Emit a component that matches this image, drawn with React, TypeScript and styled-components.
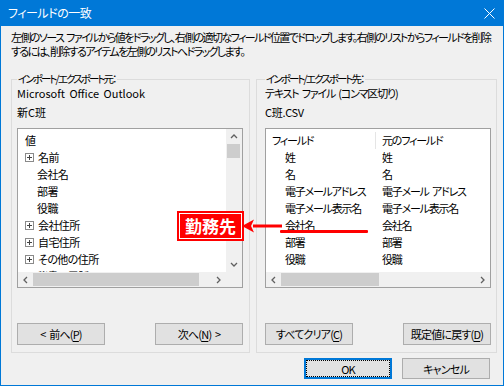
import styled, { createGlobalStyle } from "styled-components"

const GlobalStyle = createGlobalStyle`
	html, body {
		margin: 0;
		padding: 0;
		background: #f0f0f0;
	}
	body {
		font-family: "Noto Sans CJK JP", "Noto Sans", sans-serif;
		font-size: 11px;
		letter-spacing: -1.2px;
		font-feature-settings: "palt";
		color: #000;
	}
`

const Window = styled.div`
	width: 504px;
	height: 386px;
	box-sizing: border-box;
	border: 1px solid #0078d7;
	border-top: none;
	background: #f0f0f0;
	display: flex;
	flex-direction: column;
`

const TitleBar = styled.div`
	height: 26px;
	flex: none;
	background: #0078d7;
	color: #fff;
	display: flex;
	align-items: center;
	justify-content: space-between;
	padding: 0 8px 0 7px;
	font-size: 12px;
	letter-spacing: -0.5px;
	line-height: 14px;
`

const Description = styled.div`
	padding: 4px 10px 0;
	line-height: 14px;
	white-space: nowrap;
	letter-spacing: -1.6px;
	word-spacing: 2px;
`

const GroupsRow = styled.div`
	position: relative;
	margin-top: 14px;
	padding: 0 6px 0 10px;
	display: flex;
	gap: 6px;
`

const Group = styled.fieldset<{ $width: number; $inset: number }>`
	width: ${(p) => p.$width}px;
	box-sizing: border-box;
	margin: 0;
	padding: 0 0 7px ${(p) => p.$inset}px;
	border: 1px solid #dcdcdc;
	min-inline-size: 0;
`

const Legend = styled.legend`
	padding: 0 1px;
	font-size: 10.5px;
	letter-spacing: -1.9px;
	line-height: 14px;
	white-space: nowrap;
`

const InfoLine = styled.div<{ $gap?: number; $spacing?: number }>`
	line-height: 14px;
	white-space: nowrap;
	word-spacing: 2px;
	margin-top: ${(p) => p.$gap ?? 0}px;
	${(p) => (p.$spacing !== undefined ? `letter-spacing: ${p.$spacing}px;` : "")}
`

const ListBox = styled.div`
	width: 226px;
	height: 160px;
	box-sizing: border-box;
	margin-top: 9px;
	border: 1px solid #a0a0a0;
	background: #fff;
	display: grid;
	grid-template-columns: 1fr auto;
	grid-template-rows: 1fr 15px;
	overflow: hidden;
`

const ListContent = styled.div`
	padding-top: 3px;
	overflow: hidden;
	min-width: 0;
`

const Row = styled.div<{ $indent: number }>`
	height: 17px;
	line-height: 17px;
	padding-left: ${(p) => p.$indent}px;
	display: flex;
	align-items: center;
	white-space: nowrap;
	letter-spacing: -0.6px;
`

const Expander = styled.span`
	width: 7px;
	height: 7px;
	border: 1px solid #8a8a8a;
	margin-right: 4px;
	position: relative;
	flex: none;

	&::before,
	&::after {
		content: "";
		position: absolute;
		background: #444;
	}
	&::before {
		left: 1px;
		top: 3px;
		width: 5px;
		height: 1px;
	}
	&::after {
		left: 3px;
		top: 1px;
		width: 1px;
		height: 5px;
	}
`

const VScroll = styled.div`
	width: 16px;
	background: #f0f0f0;
	display: flex;
	flex-direction: column;
`

const HScroll = styled.div<{ $span?: boolean }>`
	grid-column: ${(p) => (p.$span ? "1 / -1" : "1")};
	background: #f0f0f0;
	display: flex;
	align-items: center;
`

const Corner = styled.div`
	background: #f0f0f0;
`

const ArrowBox = styled.div`
	width: 15px;
	height: 15px;
	flex: none;
	display: flex;
	align-items: center;
	justify-content: center;
`

const Thumb = styled.div<{ $size: number; $vertical?: boolean }>`
	background: #cdcdcd;
	flex: none;
	${(p) =>
		p.$vertical
			? `height: ${p.$size}px; margin: 0 2px 0 1px;`
			: `width: ${p.$size}px; height: 13px;`}
`

const Spacer = styled.div`
	flex: 1;
`

const Table = styled.div`
	overflow: hidden;
`

const TableRow = styled.div<{ $header?: boolean }>`
	display: grid;
	grid-template-columns: 110px 1fr;
	height: 17px;
	line-height: 17px;
	white-space: nowrap;
	margin-top: ${(p) => (p.$header ? 3 : 0)}px;
`

const Cell = styled.div<{ $pad: number; $divider?: boolean }>`
	padding-left: ${(p) => p.$pad}px;
	border-right: ${(p) => (p.$divider ? "1px solid #e5e5e5" : "none")};
	word-spacing: 2px;
	overflow: hidden;
`

const ButtonRow = styled.div`
	width: 226px;
	margin-top: 35px;
	display: flex;
	justify-content: space-between;
`

const Button = styled.button<{ $default?: boolean; $height?: number }>`
	width: 88px;
	height: ${(p) => p.$height ?? 22}px;
	box-sizing: border-box;
	padding: 0;
	font: inherit;
	letter-spacing: -0.8px;
	word-spacing: 2px;
	white-space: nowrap;
	color: #000;
	background: #e1e1e1;
	border: 1px solid ${(p) => (p.$default ? "#0078d7" : "#adadad")};
	box-shadow: ${(p) => (p.$default ? "inset 0 0 0 1px #0078d7" : "none")};
	outline: ${(p) => (p.$default ? "1px dotted #000" : "none")};
	outline-offset: -3px;
	line-height: 14px;
`

const Key = styled.span`
	text-decoration: underline;
	text-underline-offset: 2px;
`

const BottomRow = styled.div`
	margin-top: 5px;
	padding-right: 13px;
	display: flex;
	justify-content: flex-end;
	gap: 10px;
`

const Callout = styled.div`
	position: absolute;
	left: 178px;
	top: 141px;
	width: 63px;
	height: 26px;
	box-sizing: border-box;
	background: #ff0000;
	border: 1px solid #fff;
	outline: 2px solid #ff0000;
	color: #fff;
	font-weight: 700;
	font-size: 17px;
	letter-spacing: 0;
	line-height: 23px;
	text-align: center;
`

const ArrowMark = styled.svg`
	position: absolute;
	left: 240px;
	top: 146px;
`

const Underline = styled.div`
	position: absolute;
	left: 279px;
	top: 158px;
	width: 88px;
	height: 3px;
	background: #ff0000;
	border-radius: 1px;
`

function Chevron({ dir }: { dir: "up" | "down" | "left" | "right" }) {
	const points = {
		up: "1,5 4,2 7,5",
		down: "1,2 4,5 7,2",
		left: "5,1 2,4 5,7",
		right: "2,1 5,4 2,7"
	}[dir]
	return (
		<svg width="8" height="8" viewBox="0 0 8 8">
			<polyline points={points} fill="none" stroke="#606060" strokeWidth="1.3" />
		</svg>
	)
}

const sourceRows: { text: string; expand?: boolean }[] = [
	{ text: "名前", expand: true },
	{ text: "会社名" },
	{ text: "部署" },
	{ text: "役職" },
	{ text: "会社住所", expand: true },
	{ text: "自宅住所", expand: true },
	{ text: "その他の住所", expand: true },
	{ text: "秘書の電話" }
]

const mapRows: [string, string][] = [
	["姓", "姓"],
	["名", "名"],
	["電子メールアドレス", "電子メール アドレス"],
	["電子メール表示名", "電子メール表示名"],
	["会社名", "会社名"],
	["部署", "部署"],
	["役職", "役職"]
]

export default function App() {
	return (
		<>
			<GlobalStyle />
			<Window>
				<TitleBar>
					<span>フィールドの一致</span>
					<svg width="11" height="11" viewBox="0 0 11 11">
						<path d="M0.5 0.5 L10.5 10.5 M10.5 0.5 L0.5 10.5" stroke="#fff" strokeWidth="1" />
					</svg>
				</TitleBar>
				<Description>
					<div>
						左側のソース ファイルから値をドラッグし、右側の適切なフィールド位置でドロップします。右側のリストからフィールドを削除
					</div>
					<div>するには、削除するアイテムを左側のリストへドラッグします。</div>
				</Description>

				<GroupsRow>
					<Group $width={239} $inset={5}>
						<Legend>インポート/エクスポート元：</Legend>
						<InfoLine $spacing={0}>Microsoft Office Outlook</InfoLine>
						<InfoLine $gap={5} $spacing={0}>
							新C班
						</InfoLine>
						<ListBox>
							<ListContent>
								<Row $indent={7}>値</Row>
								{sourceRows.map((r) => (
									<Row key={r.text} $indent={r.expand ? 7 : 19}>
										{r.expand && <Expander />}
										{r.text}
									</Row>
								))}
							</ListContent>
							<VScroll>
								<ArrowBox>
									<Chevron dir="up" />
								</ArrowBox>
								<Thumb $vertical $size={14} />
								<Spacer />
								<ArrowBox>
									<Chevron dir="down" />
								</ArrowBox>
							</VScroll>
							<HScroll>
								<ArrowBox>
									<Chevron dir="left" />
								</ArrowBox>
								<Thumb $size={166} />
								<Spacer />
								<ArrowBox>
									<Chevron dir="right" />
								</ArrowBox>
							</HScroll>
							<Corner />
						</ListBox>
						<ButtonRow>
							<Button>
								&lt; 前へ(<Key>P</Key>)
							</Button>
							<Button>
								次へ(<Key>N</Key>) &gt;
							</Button>
						</ButtonRow>
					</Group>

					<Group $width={241} $inset={8}>
						<Legend>インポート/エクスポート先：</Legend>
						<InfoLine>テキスト ファイル (コンマ区切り)</InfoLine>
						<InfoLine $gap={5} $spacing={-0.3}>
							C班.CSV
						</InfoLine>
						<ListBox>
							<Table>
								<TableRow $header>
									<Cell $pad={6} $divider>
										フィールド
									</Cell>
									<Cell $pad={6}>元のフィールド</Cell>
								</TableRow>
								{mapRows.map(([a, b]) => (
									<TableRow key={a}>
										<Cell $pad={19}>{a}</Cell>
										<Cell $pad={6}>{b}</Cell>
									</TableRow>
								))}
							</Table>
							<div />
							<HScroll $span>
								<ArrowBox>
									<Chevron dir="left" />
								</ArrowBox>
								<Thumb $size={98} />
								<Spacer />
								<ArrowBox>
									<Chevron dir="right" />
								</ArrowBox>
							</HScroll>
						</ListBox>
						<ButtonRow>
							<Button>
								すべてクリア(<Key>C</Key>)
							</Button>
							<Button>
								既定値に戻す(<Key>D</Key>)
							</Button>
						</ButtonRow>
					</Group>

					<Callout>勤務先</Callout>
					<ArrowMark width="42" height="16" viewBox="0 0 42 16">
						<path d="M12 8 H41" stroke="#ff0000" strokeWidth="3" />
						<path d="M1 8 L13 1.5 L10 8 L13 14.5 Z" fill="#ff0000" />
					</ArrowMark>
					<Underline />
				</GroupsRow>

				<BottomRow>
					<Button $default $height={21}>
						OK
					</Button>
					<Button $height={21}>キャンセル</Button>
				</BottomRow>
			</Window>
		</>
	)
}
